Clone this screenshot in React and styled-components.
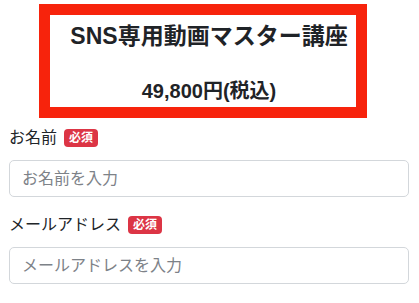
import React from "react";
import styled, { createGlobalStyle } from "styled-components";

const Global = createGlobalStyle`
  html, body { margin: 0; padding: 0; background: #fff; }
  body {
    font-family: "Liberation Sans", "Noto Sans CJK JP", sans-serif;
    color: #212529;
  }
  * { box-sizing: border-box; }
`;

const Page = styled.div`
  width: 419px;
  padding: 0 10px 0 9px;
`;

const Header = styled.header`
  position: relative;
  height: 126px;
  display: flex;
  flex-direction: column;
  align-items: center;
  padding-top: 21px;
`;

const Title = styled.h1`
  margin: 0;
  font-size: 23px;
  line-height: 30px;
  font-weight: 700;
  color: #1f2327;
`;

const Price = styled.p`
  margin: 26px 0 0;
  font-size: 20px;
  line-height: 28px;
  font-weight: 700;
  color: #1f2327;
`;

const Frame = styled.div`
  position: absolute;
  left: 30px;
  top: 4px;
  width: 328px;
  height: 114px;
  border: 11px solid #f7230c;
  pointer-events: none;
`;

const Group = styled.div`
  margin-bottom: 16px;
`;

const Label = styled.label`
  display: flex;
  align-items: center;
  gap: 7px;
  font-size: 16px;
  line-height: 24px;
  margin-bottom: 10px;
`;

const Badge = styled.span`
  display: inline-flex;
  align-items: center;
  justify-content: center;
  height: 18px;
  padding: 0 5px;
  border-radius: 4px;
  background: #dc3545;
  color: #fff;
  font-size: 12px;
  font-weight: 700;
  line-height: 1;
`;

const Input = styled.input`
  display: block;
  width: 400px;
  height: 37px;
  padding: 0 12px;
  border: 1px solid #d3d7db;
  border-radius: 5px;
  font-family: "Liberation Sans", "Noto Sans CJK JP", sans-serif;
  font-size: 16px;
  color: #212529;
  background: #fff;
  outline: none;
  &::placeholder { color: #7d8288; }
`;

const Field = ({ label, placeholder }) => (
  <Group>
    <Label>
      {label}
      <Badge>必須</Badge>
    </Label>
    <Input placeholder={placeholder} />
  </Group>
);

export default function App() {
  return (
    <Page>
      <Global />
      <Header>
        <Title>SNS専用動画マスター講座</Title>
        <Price>49,800円(税込)</Price>
        <Frame />
      </Header>
      <Field label="お名前" placeholder="お名前を入力" />
      <Field label="メールアドレス" placeholder="メールアドレスを入力" />
    </Page>
  );
}
